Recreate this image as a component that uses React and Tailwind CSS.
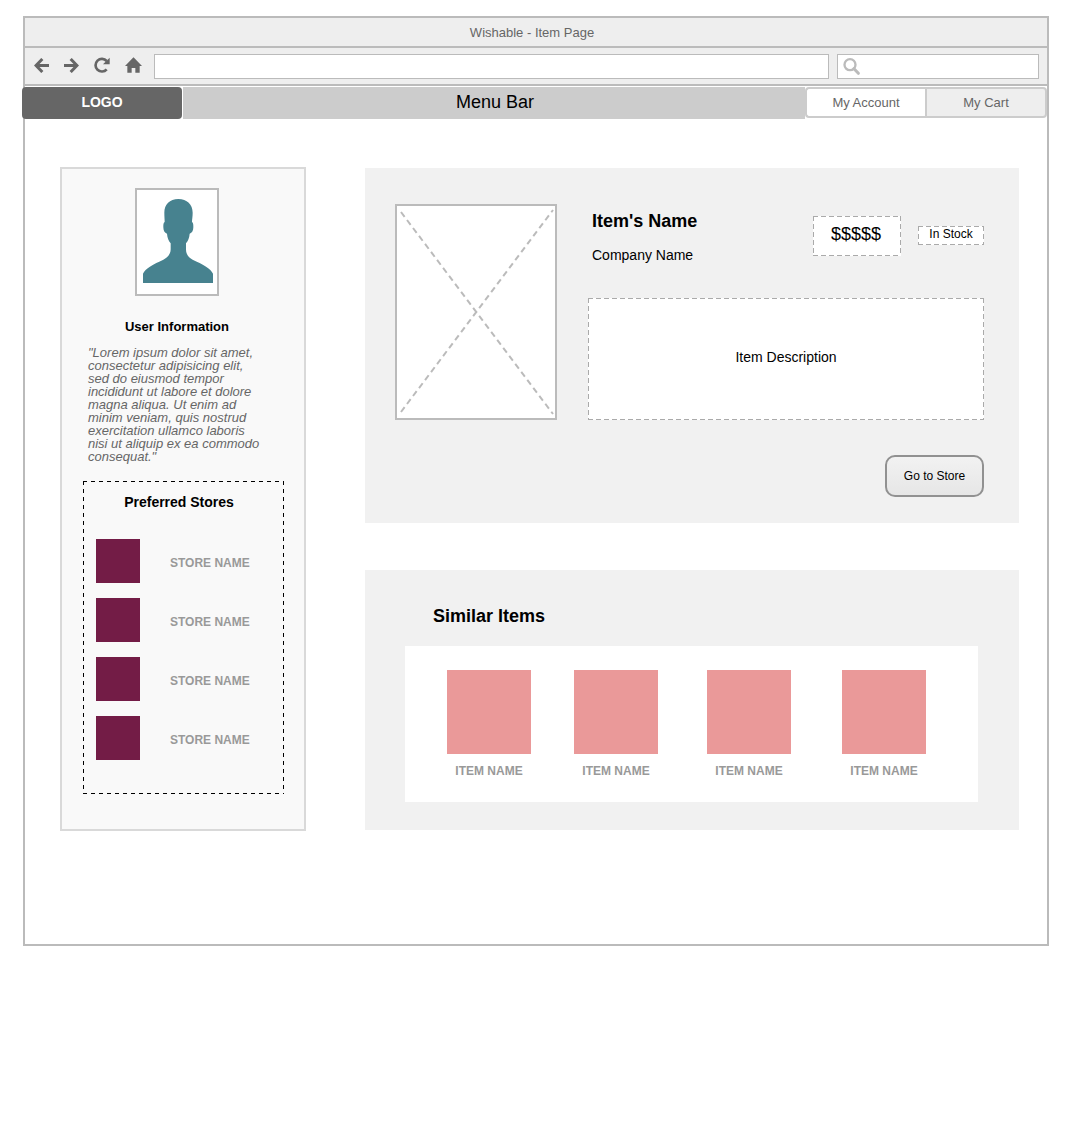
const stores = ["STORE NAME", "STORE NAME", "STORE NAME", "STORE NAME"];
const items = ["ITEM NAME", "ITEM NAME", "ITEM NAME", "ITEM NAME"];

const grayDashes =
  "[background:repeating-linear-gradient(90deg,#aaa_0_5px,transparent_5px_8px)_top/100%_1px_no-repeat,repeating-linear-gradient(90deg,#aaa_0_5px,transparent_5px_8px)_bottom/100%_1px_no-repeat,repeating-linear-gradient(180deg,#aaa_0_5px,transparent_5px_8px)_left/1px_100%_no-repeat,repeating-linear-gradient(180deg,#aaa_0_5px,transparent_5px_8px)_right/1px_100%_no-repeat,#fff]";
const blackDashes =
  "[background:repeating-linear-gradient(90deg,#000_0_4px,transparent_4px_8px)_top/100%_1px_no-repeat,repeating-linear-gradient(90deg,#000_0_4px,transparent_4px_8px)_bottom/100%_1px_no-repeat,repeating-linear-gradient(180deg,#000_0_4px,transparent_4px_8px)_left/1px_100%_no-repeat,repeating-linear-gradient(180deg,#000_0_4px,transparent_4px_8px)_right/1px_100%_no-repeat]";

function BackIcon() {
  return (
    <svg viewBox="0 0 45 45" className="h-[15px] w-[15px]" fill="none" stroke="#666" strokeWidth="9" aria-hidden="true">
      <path d="M25 3 6 22.500 25 42M7 22.500H45" />
    </svg>
  );
}

function ForwardIcon() {
  return (
    <svg viewBox="0 0 45 45" className="h-[15px] w-[15px]" fill="none" stroke="#666" strokeWidth="9" aria-hidden="true">
      <path d="M20 3 39 22.500 20 42M38 22.500H0" />
    </svg>
  );
}

function ReloadIcon() {
  return (
    <svg viewBox="0 0 48 48" className="h-4 w-4" aria-hidden="true">
      <path d="M38 37A19 19 0 1 1 38 12" fill="none" stroke="#666" strokeWidth="8" />
      <path d="M47 2V22H27Z" fill="#666" />
    </svg>
  );
}

function HomeIcon() {
  return (
    <svg viewBox="0 0 51 48" className="h-4 w-[17px]" fill="#666" aria-hidden="true">
      <path d="M25.500 1 51 27H44V47H31V33H20V47H7V27H0Z" />
    </svg>
  );
}

function SearchIcon() {
  return (
    <svg viewBox="0 0 51 51" className="h-[17px] w-[17px] shrink-0" fill="none" stroke="#bbb" strokeWidth="7" aria-hidden="true">
      <circle cx="21" cy="20" r="16.500" />
      <path d="M33 32 46 46" strokeWidth="9" strokeLinecap="round" />
    </svg>
  );
}

function Avatar() {
  return (
    <svg viewBox="0 0 240 312" className="h-[104px] w-20" role="img" aria-label="User">
      <path
        fill="#47828f"
        d="M124 27C98 27 82 43 82 68C82 80 83 88 83 96C79 98 79 104 79 112C79 122 83 129 90 131C91 144 95 152 101 160V178C101 192 92 202 79 209C50 222 24 236 18 251V279H228V251C222 236 196 222 167 209C154 202 147 192 147 178V160C153 152 157 144 158 131C165 129 169 122 169 112C169 104 169 98 165 96C165 88 167 80 167 68C167 43 150 27 124 27Z"
      />
    </svg>
  );
}

function Placeholder() {
  return (
    <div className="h-[216px] w-[162px] shrink-0 border-2 border-[#bbb] bg-white">
      <svg viewBox="0 0 158 212" className="h-full w-full" fill="none" stroke="#bbb" strokeWidth="2" strokeDasharray="6 4" role="img" aria-label="Item picture">
        <path d="M4 6 156 208" />
        <path d="M4 206 156 4" />
      </svg>
    </div>
  );
}

function Browser() {
  return (
    <div className="border-b-2 border-[#bbb] bg-[#eee]">
      <div className="flex h-[30px] items-center justify-center border-b-2 border-[#bbb] pt-px pr-2 text-[13px] leading-4 text-[#666]">
        Wishable - Item Page
      </div>
      <div className="flex h-9 items-center pr-2 pl-[9px]">
        <div className="mr-3 flex items-center gap-[15px] pb-[2px]">
          <button type="button" aria-label="Back"><BackIcon /></button>
          <button type="button" aria-label="Forward"><ForwardIcon /></button>
          <button type="button" aria-label="Reload"><ReloadIcon /></button>
          <button type="button" aria-label="Home"><HomeIcon /></button>
        </div>
        <input type="text" aria-label="Address" className="h-[25px] min-w-0 flex-1 border border-[#bbb] bg-white px-2 text-[13px]" />
        <label className="ml-2 flex h-[25px] w-[202px] items-center gap-2 border border-[#bbb] bg-white pl-[5px]">
          <SearchIcon />
          <input type="text" aria-label="Search" className="min-w-0 flex-1 text-[13px] outline-none" />
        </label>
      </div>
    </div>
  );
}

function MenuBar() {
  return (
    <nav className="mt-px -ml-[3px] flex h-8">
      <a href="#logo" className="flex w-40 items-center justify-center rounded bg-[#666] pb-[2px] text-sm font-bold text-white">
        LOGO
      </a>
      <div className="ml-px flex flex-1 items-center justify-center bg-[#ccc] pb-[2px] pl-[2px] text-lg">Menu Bar</div>
      <div className="flex h-[31px] text-[13px] text-[#666]">
        <a href="#account" className="flex w-[120px] items-center justify-center rounded-l border-2 border-r-0 border-[#ccc] bg-white">
          My Account
        </a>
        <a href="#cart" className="flex w-[122px] items-center justify-center rounded-r border-2 border-[#ccc] bg-[#eee]">
          My Cart
        </a>
      </div>
    </nav>
  );
}

function Sidebar() {
  return (
    <aside className="w-[246px] shrink-0 border-2 border-[#d9d9d9] bg-[#f9f9f9] pt-[19px] pr-5 pb-[35px] pl-[21px]">
      <div className="flex flex-col items-center pr-[13px]">
        <div className="border-2 border-[#bbb] bg-white">
          <Avatar />
        </div>
        <h2 className="mt-[23px] text-[13px] leading-4 font-bold">User Information</h2>
      </div>
      <p className="mt-[11px] ml-[5px] w-44 text-[13px] leading-[13px] text-[#666] italic">
        "Lorem ipsum dolor sit amet, consectetur adipisicing elit, sed do eiusmod tempor incididunt ut labore et dolore magna aliqua. Ut enim ad minim veniam, quis nostrud exercitation ullamco laboris nisi ut aliquip ex ea commodo consequat."
      </p>
      <section className={"mt-[18px] px-[13px] pt-[11px] pb-[34px] " + blackDashes}>
        <h2 className="pr-[9px] text-center text-sm font-bold">Preferred Stores</h2>
        <ul className="mt-[27px] flex flex-col gap-[15px]">
          {stores.map((name, i) => (
            <li key={i} className="flex items-center gap-[30px]">
              <div className="h-11 w-11 bg-[#731c46]" />
              <span className="pt-1 text-xs font-bold text-[#999]">{name}</span>
            </li>
          ))}
        </ul>
      </section>
    </aside>
  );
}

function ItemPanel() {
  return (
    <section className="bg-[#f1f1f1] pt-9 pr-[35px] pb-[26px] pl-[30px]">
      <div className="flex gap-[31px]">
        <Placeholder />
        <div className="flex min-w-0 flex-1 flex-col">
          <div className="flex pt-[3px] pl-1">
            <div className="flex-1">
              <h1 className="text-lg leading-7 font-bold">Item's Name</h1>
              <p className="mt-[10px] text-sm leading-5">Company Name</p>
            </div>
            <div className={"mt-[9px] flex h-10 w-[88px] items-center justify-center pr-[2px] pb-1 text-lg " + grayDashes}>$$$$$</div>
            <div className={"mt-[19px] ml-[17px] flex h-[19px] w-[66px] items-center justify-center pb-[3px] text-xs " + grayDashes}>
              In Stock
            </div>
          </div>
          <div className={"mt-auto flex h-[122px] items-center justify-center pb-1 text-sm " + grayDashes}>Item Description</div>
        </div>
      </div>
      <div className="mt-[35px] flex justify-end">
        <button type="button" className="h-[42px] w-[99px] rounded-[10px] border-2 border-[#919191] bg-linear-to-b from-[#f2f2f2] to-[#e6e6e6] text-xs">
          Go to Store
        </button>
      </div>
    </section>
  );
}

function SimilarItems() {
  return (
    <section className="mt-[47px] bg-[#f1f1f1] pt-8 pr-[41px] pb-7 pl-10">
      <h2 className="pl-7 text-lg leading-7 font-bold">Similar Items</h2>
      <ul className="mt-4 grid grid-cols-[127fr_133fr_135fr_136fr] bg-white pt-6 pb-[23px] pl-[42px]">
        {items.map((name, i) => (
          <li key={i} className="w-[84px] text-center">
            <div className="h-[84px] bg-[#ea9999]" />
            <p className="mt-[9px] text-xs leading-4 font-bold text-[#999]">{name}</p>
          </li>
        ))}
      </ul>
    </section>
  );
}

export default function App() {
  return (
    <div className="min-h-screen bg-white px-[23px] pt-4 font-['Liberation_Sans',Arial,sans-serif] text-black">
      <div className="border-2 border-[#bbb]">
        <Browser />
        <MenuBar />
        <div className="flex gap-[59px] pt-12 pr-7 pb-[113px] pl-[35px]">
          <Sidebar />
          <main className="min-w-0 flex-1 pt-px">
            <ItemPanel />
            <SimilarItems />
          </main>
        </div>
      </div>
    </div>
  );
}
